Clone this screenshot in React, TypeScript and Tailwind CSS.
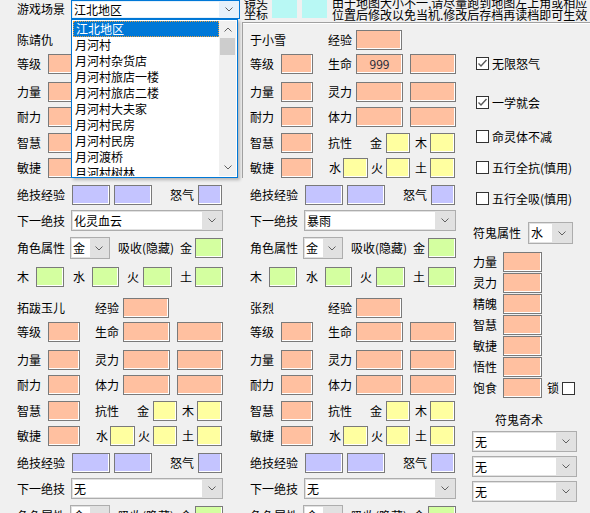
import React from 'react';
import clsx from 'clsx';

type Kids = { className?: string; children?: React.ReactNode };

function Chevron() {
  return (
    <svg width="8" height="5" viewBox="0 0 8 5">
      <polyline points="0.5,0.5 4,4 7.5,0.5" fill="none" stroke="#606060" strokeWidth="1" />
    </svg>
  );
}

function Box({ className, children }: Kids) {
  return (
    <div
      className={clsx(
        'flex h-[20px] shrink-0 items-center justify-center border border-[#7a7a7a] text-[12px] text-[#1f2a38] shadow-[inset_-1px_-1px_0_#ffffff]',
        className
      )}
    >
      {children}
    </div>
  );
}

function Combo({
  text,
  className,
  editClass = 'flex-1',
  focused,
}: {
  text: string;
  className?: string;
  editClass?: string;
  focused?: boolean;
}) {
  return (
    <div
      className={clsx(
        'flex shrink-0 items-stretch border p-[1px]',
        focused ? 'border-[#0078d7] bg-[#e5f1fb]' : 'border-[#adadad] bg-[#e1e1e1]',
        className
      )}
    >
      <div className={clsx('flex items-center overflow-hidden whitespace-nowrap bg-white pl-[1px]', editClass)}>{text}</div>
      {editClass !== 'flex-1' && <div className="flex-1" />}
      <div className="flex w-[19px] items-center justify-center">
        <Chevron />
      </div>
    </div>
  );
}

function Check({ checked }: { checked?: boolean }) {
  return (
    <div className="flex h-[13px] w-[13px] shrink-0 items-center justify-center border border-[#333333] bg-white">
      {checked && (
        <svg width="11" height="11" viewBox="0 0 11 11">
          <polyline points="1.5,5.5 4,8 9.5,2" fill="none" stroke="#5a5a5a" strokeWidth="1.4" />
        </svg>
      )}
    </div>
  );
}

function Row3({ mt, a, b, hp }: { mt: string; a: string; b: string; hp?: string }) {
  return (
    <div className={clsx('flex h-[20px] items-center', mt)}>
      <span className="ml-[17px] w-[31px]">{a}</span>
      <Box className="w-[32px] bg-[#ffc0a0]" />
      <span className="ml-[15px] w-[28px]">{b}</span>
      <Box className="w-[47px] bg-[#ffc0a0]">{hp}</Box>
      <Box className="ml-[7px] w-[46px] bg-[#ffc0a0]" />
    </div>
  );
}

function Char({ first, name, hp, skill }: { first: string; name: string; hp?: string; skill: string }) {
  return (
    <div className="flex flex-col">
      <div className={clsx('flex h-[20px] items-center', first)}>
        <span className="ml-[17px] w-[78px]">{name}</span>
        <span className="w-[28px]">经验</span>
        <Box className="w-[46px] bg-[#ffc0a0]" />
      </div>
      <Row3 mt="mt-[4px]" a="等级" b="生命" hp={hp} />
      <Row3 mt="mt-[8px]" a="力量" b="灵力" />
      <Row3 mt="mt-[5px]" a="耐力" b="体力" />

      <div className="mt-[6px] flex h-[20px] items-center">
        <span className="ml-[17px] w-[31px]">智慧</span>
        <Box className="w-[32px] bg-[#ffc0a0]" />
        <span className="ml-[15px] w-[42px]">抗性</span>
        <span className="w-[16px]">金</span>
        <Box className="w-[24px] bg-[#ffffa0]" />
        <span className="ml-[5px] w-[15px]">木</span>
        <Box className="w-[25px] bg-[#ffffa0]" />
      </div>
      <div className="mt-[5px] flex h-[20px] items-center">
        <span className="ml-[17px] w-[31px]">敏捷</span>
        <Box className="w-[32px] bg-[#ffc0a0]" />
        <span className="ml-[16px] w-[14px]">水</span>
        <Box className="w-[25px] bg-[#ffffa0]" />
        <span className="ml-[3px] w-[15px]">火</span>
        <Box className="w-[24px] bg-[#ffffa0]" />
        <span className="ml-[5px] w-[15px]">土</span>
        <Box className="w-[25px] bg-[#ffffa0]" />
      </div>

      <div className="mt-[7px] flex h-[20px] items-center">
        <span className="ml-[17px] w-[55px]">绝技经验</span>
        <Box className="w-[38px] bg-[#c4c4ff]" />
        <Box className="ml-[4px] w-[38px] bg-[#c4c4ff]" />
        <span className="ml-[18px] w-[28px]">怒气</span>
        <Box className="w-[24px] bg-[#c4c4ff]" />
      </div>

      <div className="mt-[5px] flex h-[21px] items-center">
        <span className="ml-[17px] w-[54px]">下一绝技</span>
        <Combo text={skill} className="h-[21px] w-[152px]" />
      </div>

      <div className="mt-[6px] flex h-[22px] items-center">
        <span className="ml-[17px] w-[53px]">角色属性</span>
        <Combo text="金" className="h-[22px] w-[40px]" editClass="w-[18px]" />
        <span className="ml-[8px] w-[62px] whitespace-nowrap">吸收(隐藏)</span>
        <span className="w-[15px]">金</span>
        <Box className="h-[19px] w-[28px] bg-[#d4ffa0]" />
      </div>

      <div className="mt-[8px] flex h-[19px] items-center">
        <span className="ml-[17px] w-[19px]">木</span>
        <Box className="h-[19px] w-[28px] bg-[#d4ffa0]" />
        <span className="ml-[9px] w-[19px]">水</span>
        <Box className="h-[19px] w-[27px] bg-[#d4ffa0]" />
        <span className="ml-[8px] w-[16px]">火</span>
        <Box className="h-[19px] w-[29px] bg-[#d4ffa0]" />
        <span className="ml-[8px] w-[15px]">土</span>
        <Box className="h-[19px] w-[28px] bg-[#d4ffa0]" />
      </div>
    </div>
  );
}

function CheckRow({ mt, label, checked }: { mt: string; label: string; checked?: boolean }) {
  return (
    <div className={clsx('flex h-[13px] items-center', mt)}>
      <div className="ml-[10px]">
        <Check checked={checked} />
      </div>
      <span className="ml-[3px] whitespace-nowrap">{label}</span>
    </div>
  );
}

function StatRow({ mt, label, lock }: { mt: string; label: string; lock?: boolean }) {
  return (
    <div className={clsx('flex h-[20px] items-center', mt)}>
      <span className="ml-[7px] w-[30px]">{label}</span>
      <Box className="w-[39px] bg-[#ffc0a0]" />
      {lock && (
        <>
          <span className="ml-[5px] w-[15px]">锁</span>
          <Check />
        </>
      )}
    </div>
  );
}

const places = [
  '江北地区',
  '月河村',
  '月河村杂货店',
  '月河村旅店一楼',
  '月河村旅店二楼',
  '月河村大夫家',
  '月河村民房',
  '月河村民房',
  '月河渡桥',
  '月河村树林',
];

export default function App() {
  return (
    <div className="relative h-[513px] w-[590px] overflow-hidden bg-[#f0f0f0] font-['Noto_Sans_CJK_SC',sans-serif] text-[12px] leading-[14px] text-black">
      {/* top bar */}
      <div className="flex h-[22px] items-start">
        <span className="ml-[17px] mt-[2px] w-[54px]">游戏场景</span>
        <Combo text="江北地区" focused className="h-[19px] w-[169px]" />
        <div className="ml-[4px] -mt-[3px] flex w-[28px] flex-col leading-[11px]">
          <span>镜头</span>
          <span>坐标</span>
        </div>
        <div className="h-[18px] w-[25px] bg-[#b8f8f4]" />
        <div className="ml-[5px] h-[18px] w-[25px] bg-[#b8f8f4]" />
        <div className="ml-[5px] -mt-[3px] flex flex-col whitespace-nowrap leading-[11.5px]">
          <span>由于地图大小不一,请尽量跑到地图左上角或相应</span>
          <span>位置后修改以免当机.修改后存档再读档即可生效</span>
        </div>
      </div>
      <div className="ml-[242px] h-[2px] border-t border-[#a0a0a0] bg-white" />

      {/* main */}
      <div className="flex">
        <div className="w-[233px] shrink-0">
          <Char first="mt-[6px]" name="陈靖仇" skill="化灵血云" />
          <Char first="mt-[12px]" name="拓跋玉儿" skill="无" />
        </div>
        <div className="w-[233px] shrink-0">
          <Char first="mt-[6px]" name="于小雪" hp="999" skill="暴雨" />
          <Char first="mt-[12px]" name="张烈" skill="无" />
        </div>
        <div className="flex w-[124px] shrink-0 flex-col">
          <CheckRow mt="mt-[33px]" label="无限怒气" checked />
          <CheckRow mt="mt-[26px]" label="一学就会" checked />
          <CheckRow mt="mt-[21px]" label="命灵体不减" />
          <CheckRow mt="mt-[18px]" label="五行全抗(慎用)" />
          <CheckRow mt="mt-[18px]" label="五行全吸(慎用)" />

          <div className="mt-[17px] flex h-[22px] items-center">
            <span className="ml-[7px] w-[55px]">符鬼属性</span>
            <Combo text="水" className="h-[22px] w-[45px]" editClass="w-[23px]" />
          </div>

          <StatRow mt="mt-[8px]" label="力量" />
          <StatRow mt="mt-[1px]" label="灵力" />
          <StatRow mt="mt-[1px]" label="精魄" />
          <StatRow mt="mt-[1px]" label="智慧" />
          <StatRow mt="mt-[1px]" label="敏捷" />
          <StatRow mt="mt-[1px]" label="悟性" />
          <StatRow mt="mt-[1px]" label="饱食" lock />

          <div className="mt-[15px] h-[14px] pl-[29px]">符鬼奇术</div>
          <Combo text="无" className="ml-[6px] mt-[4px] h-[21px] w-[105px]" />
          <Combo text="无" className="ml-[6px] mt-[4px] h-[21px] w-[105px]" />
          <Combo text="无" className="ml-[6px] mt-[4px] h-[21px] w-[105px]" />
        </div>
      </div>

      {/* open scene list */}
      <div className="absolute left-[71px] top-[19px] flex h-[159px] w-[167px] border border-[#0078d7] bg-white p-[1px] shadow-[2px_2px_3px_rgba(0,0,0,0.25)]">
        <div className="flex-1 overflow-hidden">
          {places.map((p, i) => (
            <div
              key={i}
              className={clsx(
                'flex h-[16px] items-center whitespace-nowrap pl-[2px]',
                i === 0 && 'border border-dotted border-[#e8a040] bg-[#0078d7] text-white'
              )}
            >
              {p}
            </div>
          ))}
        </div>
        <div className="flex w-[17px] flex-col items-center bg-[#f0f0f0]">
          <div className="flex h-[17px] items-center justify-center">
            <svg width="8" height="5" viewBox="0 0 8 5">
              <polyline points="0.5,4.5 4,1 7.5,4.5" fill="none" stroke="#606060" strokeWidth="1" />
            </svg>
          </div>
          <div className="h-[17px] w-[15px] bg-[#cdcdcd]" />
          <div className="flex-1" />
          <div className="flex h-[17px] items-center justify-center">
            <Chevron />
          </div>
        </div>
      </div>
      <div className="absolute left-[242px] top-[22px] h-[156px] w-px bg-[#a0a0a0]" />
    </div>
  );
}
